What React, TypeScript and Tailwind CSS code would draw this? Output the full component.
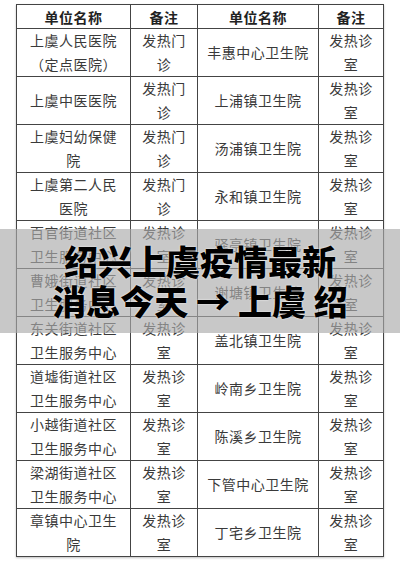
const ROWS: [string, string, string, string][] = [
  ["上虞人民医院（定点医院）", "发热门诊", "丰惠中心卫生院", "发热诊室"],
  ["上虞中医医院", "发热门诊", "上浦镇卫生院", "发热诊室"],
  ["上虞妇幼保健院", "发热门诊", "汤浦镇卫生院", "发热诊室"],
  ["上虞第二人民医院", "发热门诊", "永和镇卫生院", "发热诊室"],
  ["百官街道社区卫生服务中心", "发热诊室", "驿亭镇卫生院", "发热诊室"],
  ["曹娥街道社区卫生服务中心", "发热诊室", "谢塘镇卫生院", "发热诊室"],
  ["东关街道社区卫生服务中心", "发热诊室", "盖北镇卫生院", "发热诊室"],
  ["道墟街道社区卫生服务中心", "发热诊室", "岭南乡卫生院", "发热诊室"],
  ["小越街道社区卫生服务中心", "发热诊室", "陈溪乡卫生院", "发热诊室"],
  ["梁湖街道社区卫生服务中心", "发热诊室", "下管中心卫生院", "发热诊室"],
  ["章镇中心卫生院", "发热诊室", "丁宅乡卫生院", "发热诊室"],
];

const HEADERS = ["单位名称", "备注", "单位名称", "备注"];

export default function App() {
  return (
    <div className="relative h-[563px] w-[400px] overflow-hidden bg-white font-['Noto_Sans_CJK_SC',sans-serif]">
      <div className="pl-[16px] pt-[4px]">
        <table className="w-[367px] table-fixed border-collapse border border-[#444] text-center text-[14px] tracking-[0.5px] text-[#3a3a3a] shadow-[0_1px_2px_rgba(0,0,0,0.25)]">
          <colgroup>
            <col className="w-[114px]" />
            <col className="w-[67px]" />
            <col className="w-[121px]" />
            <col className="w-[65px]" />
          </colgroup>
          <thead>
            <tr>
              {HEADERS.map((h, i) => (
                <th
                  key={i}
                  className="h-[24px] border border-[#444] px-[8px] py-0 font-semibold leading-[22px] text-[#222]"
                >
                  {h}
                </th>
              ))}
            </tr>
          </thead>
          <tbody>
            {ROWS.map((row, r) => (
              <tr key={r}>
                {row.map((cell, c) => (
                  <td
                    key={c}
                    className="h-[48px] border border-[#444] px-[8px] py-0 leading-[23.5px]"
                  >
                    {cell}
                  </td>
                ))}
              </tr>
            ))}
          </tbody>
        </table>
      </div>

      {/* title banner over the table */}
      <div className="absolute left-0 right-0 top-[229px] flex h-[104px] flex-col items-center justify-center bg-[#ababab]/65">
        <div className="text-center text-[34px] font-black leading-[40px] text-black [text-shadow:0_0_2px_#fff]">
          <div>绍兴上虞疫情最新</div>
          <div>消息今天 → 上虞 绍</div>
        </div>
      </div>
    </div>
  );
}
